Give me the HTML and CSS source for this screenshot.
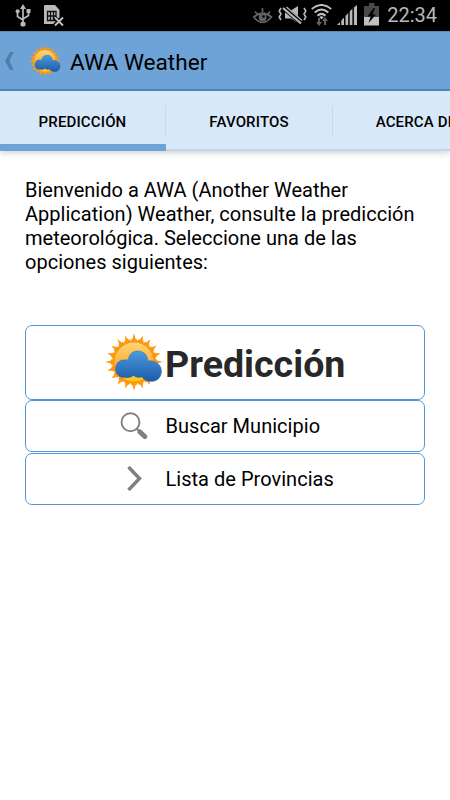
FILE: index.html
```
<!DOCTYPE html>
<html lang="es">
<head>
  <meta charset="UTF-8">
  <title>AWA Weather</title>
  <link rel="stylesheet" href="styles.css">
</head>
<body>

  <svg class="defs" width="0" height="0">
    <defs>
      <linearGradient id="disc" x1="0" y1="0" x2="0" y2="1">
        <stop offset="0" stop-color="#ffd878"/>
        <stop offset="0.55" stop-color="#fdae38"/>
        <stop offset="1" stop-color="#ffd21c"/>
      </linearGradient>
      <linearGradient id="cloudFill" x1="0" y1="0" x2="0" y2="1">
        <stop offset="0" stop-color="#4a9be0"/>
        <stop offset="1" stop-color="#1d5ba6"/>
      </linearGradient>
      <g id="rays">
        <path d="M-4 -19 L-2.6 -23 L-1.6 -23 L0 -28.8 L1.6 -23 L2.6 -23 L4 -19z"/>
        <path transform="rotate(18)" d="M-4 -19 L-2.6 -23 L-1.6 -23 L.4 -28 L1.6 -23 L2.6 -23 L4 -19z"/>
        <path transform="rotate(36)" d="M-4 -19 L-2.6 -23 L-1.6 -23 L0 -28 L1.6 -23 L2.6 -23 L4 -19z"/>
        <path transform="rotate(54)" d="M-4 -19 L-2.6 -23 L-1.6 -23 L0 -28 L1.6 -23 L2.6 -23 L4 -19z"/>
        <path transform="rotate(72)" d="M-4 -19 L-2.6 -23 L-1.6 -23 L-.4 -28 L1.6 -23 L2.6 -23 L4 -19z"/>
      </g>
      <symbol id="weather" viewBox="-29 -29 58 58">
        <g fill="#ff9810">
          <use href="#rays"/>
          <use href="#rays" transform="rotate(90)"/>
          <use href="#rays" transform="rotate(180)"/>
          <use href="#rays" transform="rotate(270)"/>
        </g>
        <circle r="20.3" fill="url(#disc)" stroke="#f9980d" stroke-width="1.6"/>
        <path d="M-9 15.500 C-14 16 -18.500 12.500 -18.500 7 C-18.500 1 -14 -3 -8 -2 C-7 -2 -6 -2.500 -5.500 -3.500 C-4.500 -8.500 -1 -11 4 -11 C9.500 -11 13.500 -7.500 14 -1 C20 -2.500 27.500 2 27.500 9 C27.500 15.500 23 19.500 17.500 19.500 C13 19.500 10 18 8 15 C5 16 1.500 15.500 -.5 13.500 C-3 15.500 -6 16 -9 15.500z" fill="url(#cloudFill)" stroke="#2867ab" stroke-width=".4"/>
      </symbol>
    </defs>
  </svg>

  <div class="statusbar">
    <svg class="usb" width="16" height="24" viewBox="0 0 16 24">
      <g fill="none" stroke="#b9b9b9" stroke-width="1.700">
        <path d="M8 3v17M2.500 8v4.500L8 16M13.500 8v3.500L8 15"/>
      </g>
      <path fill="#b9b9b9" d="M8 0l3 5H5zM11.500 5h4v4h-4z"/>
      <circle cx="2.600" cy="7.300" r="2" fill="#b9b9b9"/>
      <circle cx="8" cy="20" r="2.600" fill="#b9b9b9"/>
    </svg>
    <svg class="sim" width="20" height="22" viewBox="0 0 20 22">
      <path fill="#b9b9b9" d="M1 0h10l4.500 5v14H0V1q0-1 1-1z"/>
      <path fill="none" stroke="#111" stroke-width="1.300" d="M3.500 6.500h8.500v9H3.500zM6.500 6v10M9.500 6v10M3 11h9"/>
      <path stroke="#000" stroke-width="4" d="M10.500 12.500l8 8M18.500 12.500l-8 8"/>
      <path stroke="#c4c4c4" stroke-width="1.800" d="M11 12.500l8 8M19 12.500l-8 8"/>
    </svg>
    <span class="spacer"></span>
    <svg class="eye" width="20" height="16" viewBox="0 0 20 16">
      <g fill="none" stroke="#626262" stroke-width="1.700">
        <path d="M.8 9Q9.500 1.500 18.500 9Q9.500 20 .8 9zM2 3.500l2.500 3M9.500 0v4M17 3.500l-2.500 3"/>
      </g>
      <circle cx="9.600" cy="9.500" r="3.900" fill="#626262"/>
      <circle cx="10.500" cy="8.500" r="1.300" fill="#000"/>
    </svg>
    <svg class="mute" width="29" height="20" viewBox="0 0 29 20">
      <path fill="#b9b9b9" d="M7 5.500h6l7-4.500v17l-7-4.500H7z"/>
      <path stroke="#000" stroke-width="5.500" d="M5 2l20 17"/>
      <path stroke="#b9b9b9" stroke-width="2.200" d="M5 3l18 15.500"/>
      <path stroke="#b9b9b9" stroke-width="1.200" d="M8.500 2L24 15.500"/>
      <path fill="none" stroke="#b9b9b9" stroke-width="1.600" d="M3 3L1.200 6l1.800 3-1.800 3L3 15M26 3l1.800 3L26 9l1.800 3-1.800 3"/>
    </svg>
    <svg class="wifi" width="21" height="22" viewBox="0 0 21 22">
      <g fill="none" stroke="#c0c0c0" stroke-width="2">
        <path d="M.8 5Q10.500-3 20.200 5M3.700 8.500q6.800-6 13.600 0M6.500 11.700q4-3.700 8 0"/>
      </g>
      <path fill="#c0c0c0" d="M8.300 13q2.200-1.700 4.400 0l-2.200 2.500z"/>
      <path fill="#626262" d="M7 14h2v4h2l-3 4-3-4h2zM13 21v-4h-2l3-4 3 4h-2v4z"/>
    </svg>
    <svg class="signal" width="20" height="21" viewBox="0 0 20 21">
      <path fill="#b9b9b9" d="M0 20l3-3v3zM4.300 20v-4.500l2.700-3V20zM8.500 20v-9l2.700-3v12zM12.700 20V6.500l2.700-3V20zM16.900 20V2.500L20 0v20z"/>
    </svg>
    <svg class="battery" width="15" height="23" viewBox="0 0 15 23">
      <path fill="#494949" d="M5 0h5.500v3H15v11H0V3h5z"/>
      <path fill="#c0c0c0" d="M0 14h15v8.500H0z"/>
      <path fill="#000" d="M9.500 5L3.500 13.500h3.200L4.500 20l7.500-8.500H8.500L11 5z"/>
    </svg>
    <span class="clock">22:34</span>
  </div>

  <header>
    <svg class="back" width="9" height="18" viewBox="0 0 9 18">
      <path fill="#537da9" d="M5 0h3.500L4.500 9l4 9H5L0 9z"/>
    </svg>
    <svg class="logo" width="32" height="32"><use href="#weather"/></svg>
    <h1>AWA Weather</h1>
  </header>

  <nav class="tabs">
    <div class="tab active"><span>PREDICCIÓN</span></div>
    <div class="tab"><span>FAVORITOS</span></div>
    <div class="tab"><span>ACERCA DE</span></div>
  </nav>

  <main>
    <p class="intro">Bienvenido a AWA (Another Weather<br>Application) Weather, consulte la predicción<br>meteorológica. Seleccione una de las<br>opciones siguientes:</p>

    <div class="card title">
      <svg width="58" height="58"><use href="#weather"/></svg>
      <h2>Predicción</h2>
    </div>
    <div class="card">
      <svg width="28" height="28" viewBox="0 0 28 28">
        <circle cx="10.500" cy="10.300" r="9" fill="none" stroke="#808080" stroke-width="1.900"/>
        <path stroke="#808080" stroke-width="2" d="M16.500 16.500l4 4"/>
        <path stroke="#808080" stroke-width="5" stroke-linecap="round" d="M20 20l4.800 4.500"/>
      </svg>
      <span>Buscar Municipio</span>
    </div>
    <div class="card">
      <svg width="28" height="28" viewBox="0 0 28 28">
        <path fill="none" stroke="#808080" stroke-width="3.400" d="M8.500 2L19.500 13.500 8.500 25"/>
      </svg>
      <span>Lista de Provincias</span>
    </div>
  </main>

</body>
</html>
```
FILE: styles.css
```
body {
  font-family: Roboto, "Noto Sans", sans-serif;
  background-color: #fff;
  color: #000;
  margin: 0;
  padding: 0;
  overflow: hidden;
}

svg {
  display: block;
  flex: none;
}

.defs {
  position: absolute;
}

.statusbar {
  display: flex;
  align-items: flex-start;
  height: 31px;
  box-sizing: border-box;
  padding: 4px 13px 0 15px;
  background: #000;
}

.sim {
  margin: 1px 0 0 13px;
}

.spacer {
  flex: 1;
}

.eye {
  margin: 4px 5px 0 0;
}

.mute {
  margin: 1px 4px 0 0;
}

.wifi {
  margin-right: 5px;
}

.signal {
  margin: 1px 7px 0 0;
}

.battery {
  margin: -1px 8px 0 0;
}

.clock {
  color: #b9b9b9;
  font-size: 20px;
  line-height: 23px;
}

header {
  display: flex;
  align-items: center;
  height: 60px;
  box-sizing: border-box;
  padding-left: 5px;
  background: #6ea3d7;
  border-top: 1px solid #5d8bb8;
  border-bottom: 2px solid #5489bd;
}

.logo {
  margin: 0 9px 0 15px;
}

h1 {
  margin: 0;
  padding-top: 3px;
  font-size: 22.6px;
  font-weight: 400;
}

.tabs {
  display: flex;
  height: 60px;
  background: #d7e8f8;
  overflow: hidden;
  box-shadow: 0 2px 6px rgba(0,0,0,0.18);
}

.tab {
  flex: none;
  width: 167px;
  height: 60px;
  box-sizing: border-box;
  display: flex;
  align-items: flex-start;
  padding-top: 15px;
  border-bottom: 2px solid #c2d5e6;
  font-size: 15px;
  font-weight: 500;
  letter-spacing: 0.15px;
}

.tab span {
  flex: 1;
  text-align: center;
  white-space: nowrap;
  line-height: 32px;
  height: 30px;
  border-right: 1px solid #c7d9ea;
}

.tab.active {
  width: 166px;
  border-bottom: 7px solid #6ea3d7;
}

main {
  padding: 28px 25px 0;
}

.intro {
  margin: 0 0 50px;
  font-size: 20px;
  line-height: 23.9px;
  letter-spacing: 0.02px;
}

.card {
  display: flex;
  align-items: center;
  height: 52px;
  box-sizing: border-box;
  margin-bottom: 1px;
  padding-left: 94px;
  border: 1px solid #5397d6;
  border-radius: 7px;
  font-size: 20px;
}

.card span {
  margin-left: 17.500px;
  letter-spacing: 0.03px;
}

.title {
  height: 75px;
  margin-bottom: 0;
  padding-left: 79px;
}

h2 {
  margin: 3px 0 0 2px;
  font-size: 37.6px;
  font-weight: 700;
  color: #282828;
}
```
